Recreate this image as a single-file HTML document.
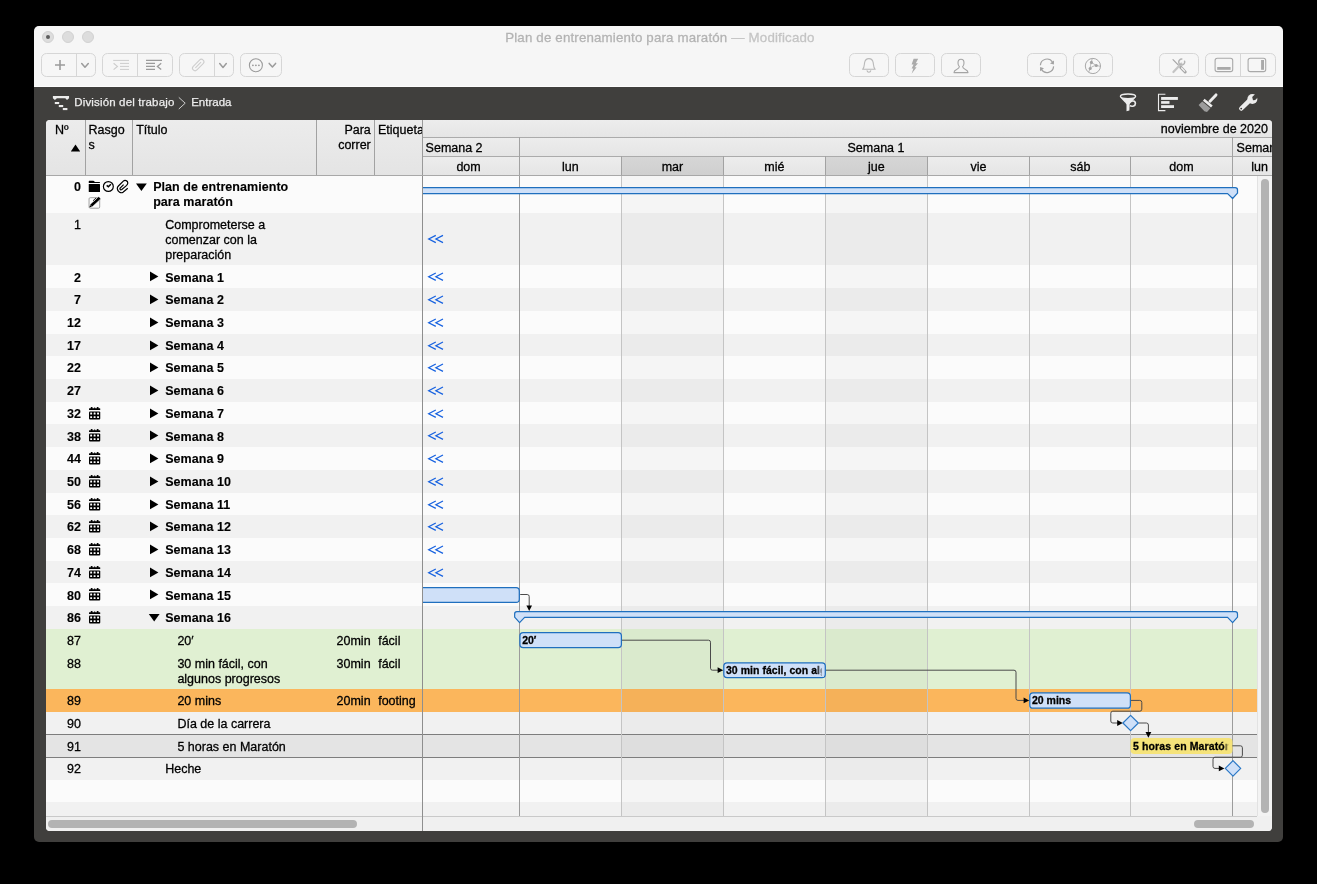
<!DOCTYPE html>
<html><head><meta charset="utf-8"><title>Plan de entrenamiento para maratón</title>
<style>
html,body{margin:0;padding:0}
body{width:1317px;height:884px;background:#000;position:relative;overflow:hidden;
 font-family:"Liberation Sans",sans-serif;font-size:12.5px;line-height:15.0px;color:#000}
.a{position:absolute}
.t{position:absolute;white-space:nowrap;letter-spacing:0.0px;-webkit-text-stroke:0.28px currentColor}
.b{font-weight:bold;letter-spacing:0.05px;-webkit-text-stroke:0.12px currentColor}
.btn{position:absolute;box-sizing:border-box;border:1px solid #d6d6d6;border-radius:5.5px;top:53.2px;height:23.6px}
.dv{position:absolute;width:1px;background:#d6d6d6;top:53.7px;height:22.6px}
.vl{position:absolute;width:1px;top:0;background:#c6c6c6}
svg{position:absolute;overflow:visible}
</style></head><body>
<div class="a" style="left:0;top:0;width:1317px;height:884px;will-change:transform">

<div class="a" style="left:34px;top:26px;width:1249px;height:815.8px;background:#403f3d;border-radius:5px;overflow:hidden">
<div class="a" style="left:0;top:0;width:100%;height:60px;background:#f6f6f6"></div>
<div class="a" style="left:0;top:60px;width:100%;height:1px;background:#fdfdfd"></div>
</div>
<div class="a" style="left:42px;top:31px;width:12px;height:12px;box-sizing:border-box;border-radius:50%;background:#dddddd;border:1px solid #d2d2d2"></div>
<div class="a" style="left:62px;top:31px;width:12px;height:12px;box-sizing:border-box;border-radius:50%;background:#dddddd;border:1px solid #d2d2d2"></div>
<div class="a" style="left:82px;top:31px;width:12px;height:12px;box-sizing:border-box;border-radius:50%;background:#dddddd;border:1px solid #d2d2d2"></div>
<div class="a" style="left:46px;top:35px;width:4px;height:4px;border-radius:50%;background:#5e5e5e"></div>
<div class="t" style="left:35.4px;width:1249px;top:30px;text-align:center;font-size:13.3px;letter-spacing:0.165px;color:#b3b3b3">Plan de entrenamiento para maratón <span style="color:#c4c4c4">— Modificado</span></div>
<div class="btn" style="left:41.3px;width:54.4px"></div>
<div class="dv" style="left:76.1px"></div>
<svg style="left:0;top:0" width="1" height="1"><path d="M55 65H65M60 60V70" stroke="#9b9b9b" stroke-width="1.6" fill="none"/></svg>
<svg style="left:0;top:0" width="1" height="1"><path d="M81.7 63.5 L85 67.3 L88.3 63.5" fill="none" stroke="#9b9b9b" stroke-width="1.5" stroke-linecap="round" stroke-linejoin="round"/></svg>
<div class="btn" style="left:102.4px;width:70.3px"></div>
<div class="dv" style="left:136.9px"></div>
<svg style="left:0;top:0" width="1" height="1"><g fill="none" stroke="#cdcdcd" stroke-width="1"><path d="M113.2 60.4H129M120 63.4H129M120 66.4H129M120 69.4H129"/><path d="M113.6 63.2L117.4 66.4L113.6 69.6" stroke-width="1.2"/></g></svg>
<svg style="left:0;top:0" width="1" height="1"><g fill="none" stroke="#9b9b9b" stroke-width="1.1"><path d="M146 60.4H162M146 63.4H155M146 66.4H155M146 69.4H155"/><path d="M161.2 63.2L157.4 66.4L161.2 69.6" stroke-width="1.3"/></g></svg>
<div class="btn" style="left:179.4px;width:54.3px"></div>
<div class="dv" style="left:213.9px"></div>
<svg style="left:0;top:0" width="1" height="1"><g transform="translate(198.2 65) rotate(-45)" fill="none" stroke="#cdcdcd" stroke-width="1"><rect x="-7" y="-2.6" width="14" height="5.2" rx="2.6"/><path d="M-4 0H4"/></g></svg>
<svg style="left:0;top:0" width="1" height="1"><path d="M219.7 63.6 L223 67.4 L226.3 63.6" fill="none" stroke="#9b9b9b" stroke-width="1.5" stroke-linecap="round" stroke-linejoin="round"/></svg>
<div class="btn" style="left:240.2px;width:41.4px"></div>
<svg style="left:0;top:0" width="1" height="1"><circle cx="255.9" cy="65.3" r="6.5" fill="none" stroke="#9b9b9b" stroke-width="1.1"/><g fill="#9b9b9b"><circle cx="252.9" cy="65.3" r="0.9"/><circle cx="255.9" cy="65.3" r="0.9"/><circle cx="258.9" cy="65.3" r="0.9"/></g></svg>
<svg style="left:0;top:0" width="1" height="1"><path d="M269.2 63.4 L272.4 67 L275.6 63.4" fill="none" stroke="#9b9b9b" stroke-width="1.5" stroke-linecap="round" stroke-linejoin="round"/></svg>
<div class="btn" style="left:849px;width:39.8px"></div>
<svg style="left:0;top:0" width="1" height="1"><g fill="none" stroke="#b9b9b9" stroke-width="1.1" stroke-linejoin="round"><path d="M862.6 69.3 C864.6 67.6 864.2 64.6 864.6 62.6 C865.1 60 866.8 58.6 868.9 58.6 C871 58.6 872.7 60 873.2 62.6 C873.6 64.6 873.2 67.6 875.2 69.3 Z"/><path d="M866.9 70.3 C867.2 71.6 868 72.2 868.9 72.2 C869.8 72.2 870.6 71.6 870.9 70.3"/></g></svg>
<div class="btn" style="left:895px;width:39.9px"></div>
<svg style="left:0;top:0" width="1" height="1"><path d="M913.6 58.8 L918.2 58.8 L915.8 63.2 L918 63.2 L914.6 67.2 L916.6 67.2 L911.6 73.8 L913.4 68.6 L911.6 68.6 L913.6 64.4 L911.6 64.4 Z" fill="#ababab"/></svg>
<div class="btn" style="left:941px;width:39.9px"></div>
<svg style="left:0;top:0" width="1" height="1"><path d="M961 59.3 C962.9 59.3 964 60.9 964 62.9 C964 64.6 963.4 65.9 962.6 66.6 C962.6 68 963.6 68.6 965.4 69.4 C967 70.1 968 71 968 72.6 L954 72.6 C954 71 955 70.1 956.6 69.4 C958.4 68.6 959.4 68 959.4 66.6 C958.6 65.9 958 64.6 958 62.9 C958 60.9 959.1 59.3 961 59.3 Z" fill="none" stroke="#a4a4a4" stroke-width="1.1" stroke-linejoin="round"/></svg>
<div class="btn" style="left:1027.2px;width:39.6px"></div>
<svg style="left:0;top:0" width="1" height="1"><g fill="none" stroke="#a2a2a2" stroke-width="1.2"><path d="M1040.4 65.2 A6.6 6.6 0 0 1 1052.6 62.2"/><path d="M1053.6 66.4 A6.6 6.6 0 0 1 1041.4 69.4"/></g><path d="M1054 60.4 L1053.9 64.6 L1050 63.4 Z M1040 71.2 L1040.1 67 L1044 68.2 Z" fill="#a2a2a2"/></svg>
<div class="btn" style="left:1073.2px;width:39.6px"></div>
<svg style="left:0;top:0" width="1" height="1"><g fill="none" stroke="#a8a8a8" stroke-width="1"><circle cx="1092.9" cy="66" r="7.6"/><path d="M1091.4 62.4 C1090.6 64.4 1090.2 66.4 1090.2 68.5 M1091.4 62.4 L1096.3 65.5 M1090.2 68.5 C1091.8 66.6 1093.8 65.8 1096.3 65.5 M1091.4 62.4 L1092.2 58.6 M1096.3 65.5 L1100.4 66.3 M1090.2 68.5 L1088.6 72.2" stroke-width="0.8"/></g><g fill="#a2a2a2"><circle cx="1091.4" cy="62.4" r="1.55"/><circle cx="1096.3" cy="65.5" r="1.55"/><circle cx="1090.2" cy="68.5" r="1.55"/></g></svg>
<div class="btn" style="left:1159.3px;width:39.5px"></div>
<svg style="left:0;top:0" width="1" height="1"><g stroke-linecap="round" fill="none"><path d="M1173 59.6 L1180.6 67.4" stroke="#a6a6a6" stroke-width="1.2"/><path d="M1180.8 67.4 L1185.2 72" stroke="#a6a6a6" stroke-width="3"/><path d="M1181.6 68 L1184.6 71.2" stroke="#f6f6f6" stroke-width="1.2"/><path d="M1173.4 72 L1181.4 63.6" stroke="#c4c4c4" stroke-width="2.2"/><path d="M1184.6 61.2 A3 3 0 1 1 1181.8 59" stroke="#b4b4b4" stroke-width="1.5"/></g></svg>
<div class="btn" style="left:1205.2px;width:70.8px"></div>
<div class="dv" style="left:1240.1px"></div>
<svg style="left:0;top:0" width="1" height="1"><rect x="1215.1" y="58.3" width="17.6" height="13.3" rx="2.2" fill="none" stroke="#a9a9a9" stroke-width="1.1"/><rect x="1217.2" y="67" width="13.4" height="2.8" fill="#a9a9a9"/></svg>
<svg style="left:0;top:0" width="1" height="1"><rect x="1248.1" y="58.3" width="17.6" height="13.3" rx="2.2" fill="none" stroke="#a9a9a9" stroke-width="1.1"/><rect x="1261.1" y="60" width="2.9" height="9.8" fill="#a9a9a9"/></svg>
<svg style="left:0;top:0" width="1" height="1"><g fill="#ececec"><path d="M52.9 95.9 H69.05 V98.2 L67 100.1 L65.3 98.2 H56.9 L54.9 100.1 L52.9 98.2 Z"/><rect x="54.8" y="102" width="4.4" height="2.05"/><rect x="58.8" y="105" width="4.4" height="2.1"/><rect x="62.8" y="108" width="4.6" height="2.1"/></g></svg>
<div class="t" style="left:74.3px;top:94.5px;letter-spacing:0.15px;font-size:11.5px;color:#ededed;-webkit-text-stroke:0.25px #ededed">División del trabajo</div>
<svg style="left:0;top:0" width="1" height="1"><path d="M178.8 97.4 L185.2 103.2 L178.8 109" fill="none" stroke="#dcdcdc" stroke-width="0.9"/></svg>
<div class="t" style="left:191.2px;top:94.5px;letter-spacing:0px;font-size:11.5px;color:#ededed;-webkit-text-stroke:0.25px #ededed">Entrada</div>
<svg style="left:0;top:0" width="1" height="1"><g><ellipse cx="1128" cy="96.3" rx="7.6" ry="2.3" fill="none" stroke="#ececec" stroke-width="1.4"/><path d="M1120.4 97 C1123 99 1133 99 1135.6 97 C1134.6 99.6 1130.2 102.4 1129.6 104.6 L1129.4 110.6 L1126.5 111.2 L1126.5 104.6 C1125.8 102.4 1121.4 99.6 1120.4 97 Z" fill="#ececec"/><path d="M1130 102.2 C1131.6 100.4 1135.4 100.4 1135.4 103.4 C1135.4 106 1132.4 106.8 1129.8 105.8" fill="none" stroke="#ececec" stroke-width="1.6"/></g></svg>
<svg style="left:0;top:0" width="1" height="1"><path d="M1165.4 94.3 H1158.5 V110.6 H1165.4" fill="none" stroke="#ececec" stroke-width="1.1"/><g fill="#ececec"><rect x="1161.1" y="97" width="16.8" height="2.9"/><rect x="1161.1" y="101.1" width="8.4" height="2.7"/><rect x="1161.1" y="105.2" width="12.9" height="2.8"/></g></svg>
<svg style="left:0;top:0" width="1" height="1"><path d="M1216 94.9 L1210 101.2" stroke="#ececec" stroke-width="2.9" stroke-linecap="round" fill="none"/><path d="M1204.6 98.7 L1212.7 105.5 L1211 107.4 L1202.9 100.7 Z" fill="#ececec"/><path d="M1202.3 101.5 L1210.4 108.2 L1207 112 L1204.4 111.3 L1198.6 105 Z" fill="#9c9c9c"/></svg>
<svg style="left:0;top:0" width="1" height="1"><path d="M1241.3 108.5 L1250.4 99.6" stroke="#ececec" stroke-width="4.5" stroke-linecap="round" fill="none"/><circle cx="1252.4" cy="99" r="5" fill="#ececec"/><path d="M1252.2 97 L1256.8 92.4 L1259.8 95.4 L1255.2 100 L1253 100.2 Z" fill="#403f3d"/><circle cx="1241.2" cy="108.6" r="0.95" fill="#403f3d"/></svg>
<div class="a" style="left:46px;top:119.8px;width:1226px;height:711.2px;background:#f0f0f0;border-radius:4px;overflow:hidden">
<div class="a" style="left:-46px;top:-119.8px;width:1317px;height:884px">
<div class="a" style="left:46px;top:175.4px;width:1226px;height:37.9px;background:#fbfbfb"></div>
<div class="a" style="left:46px;top:213px;width:1226px;height:52.3px;background:#f1f1f1"></div>
<div class="a" style="left:46px;top:265px;width:1226px;height:23.3px;background:#fbfbfb"></div>
<div class="a" style="left:46px;top:288px;width:1226px;height:23.3px;background:#f1f1f1"></div>
<div class="a" style="left:46px;top:311px;width:1226px;height:23.3px;background:#fbfbfb"></div>
<div class="a" style="left:46px;top:334px;width:1226px;height:22.3px;background:#f1f1f1"></div>
<div class="a" style="left:46px;top:356px;width:1226px;height:23.3px;background:#fbfbfb"></div>
<div class="a" style="left:46px;top:379px;width:1226px;height:23.3px;background:#f1f1f1"></div>
<div class="a" style="left:46px;top:402px;width:1226px;height:22.3px;background:#fbfbfb"></div>
<div class="a" style="left:46px;top:424px;width:1226px;height:23.3px;background:#f1f1f1"></div>
<div class="a" style="left:46px;top:447px;width:1226px;height:23.3px;background:#fbfbfb"></div>
<div class="a" style="left:46px;top:470px;width:1226px;height:23.3px;background:#f1f1f1"></div>
<div class="a" style="left:46px;top:493px;width:1226px;height:22.3px;background:#fbfbfb"></div>
<div class="a" style="left:46px;top:515px;width:1226px;height:23.3px;background:#f1f1f1"></div>
<div class="a" style="left:46px;top:538px;width:1226px;height:23.3px;background:#fbfbfb"></div>
<div class="a" style="left:46px;top:561px;width:1226px;height:22.3px;background:#f1f1f1"></div>
<div class="a" style="left:46px;top:583px;width:1226px;height:23.3px;background:#fbfbfb"></div>
<div class="a" style="left:46px;top:606px;width:1226px;height:23.3px;background:#f1f1f1"></div>
<div class="a" style="left:46px;top:629px;width:1226px;height:23.3px;background:#e0f0d2"></div>
<div class="a" style="left:46px;top:652px;width:1226px;height:37.3px;background:#e0f0d2"></div>
<div class="a" style="left:46px;top:689px;width:1226px;height:23.3px;background:#fbb65c"></div>
<div class="a" style="left:46px;top:712px;width:1226px;height:23.3px;background:#f1f1f1"></div>
<div class="a" style="left:46px;top:735px;width:1226px;height:22.9px;background:#e4e4e4"></div>
<div class="a" style="left:46px;top:757.6px;width:1226px;height:22.7px;background:#f1f1f1"></div>
<div class="a" style="left:46px;top:780px;width:1226px;height:22.3px;background:#fbfbfb"></div>
<div class="a" style="left:46px;top:802px;width:1226px;height:14.7px;background:#f1f1f1"></div>
<div class="a" style="left:621.5px;top:175.3px;width:101.89px;height:641.1px;background:rgba(0,0,0,0.023)"></div>
<div class="a" style="left:825.5px;top:175.3px;width:101.89px;height:641.1px;background:rgba(0,0,0,0.023)"></div>
<div class="a" style="left:46px;top:734.4px;width:1211px;height:1px;background:#7d7d7d"></div>
<div class="a" style="left:46px;top:757.3px;width:1211px;height:1px;background:#7d7d7d"></div>
<div class="a" style="left:519px;top:175.3px;width:1px;height:641.1px;background:#9c9c9c"></div>
<div class="a" style="left:621px;top:175.3px;width:1px;height:641.1px;background:#c4c4c4"></div>
<div class="a" style="left:723px;top:175.3px;width:1px;height:641.1px;background:#c4c4c4"></div>
<div class="a" style="left:825px;top:175.3px;width:1px;height:641.1px;background:#c4c4c4"></div>
<div class="a" style="left:927px;top:175.3px;width:1px;height:641.1px;background:#c4c4c4"></div>
<div class="a" style="left:1029px;top:175.3px;width:1px;height:641.1px;background:#c4c4c4"></div>
<div class="a" style="left:1130px;top:175.3px;width:1px;height:641.1px;background:#c4c4c4"></div>
<div class="a" style="left:1232px;top:175.3px;width:1px;height:641.1px;background:#9c9c9c"></div>
<div class="a" style="left:1257px;top:175.3px;width:15px;height:641.1px;background:#f3f3f3;border-left:1px solid #e2e2e2"></div>
<div class="a" style="left:1261.2px;top:179px;width:7.8px;height:633.8px;border-radius:4px;background:#b3b3b3"></div>
<div class="a" style="left:46px;top:816.4px;width:1226px;height:14.6px;background:#f0f0f0"></div>
<div class="a" style="left:46px;top:816.4px;width:1211px;height:1px;background:#c9c9c9"></div>
<div class="a" style="left:48px;top:819.9px;width:309px;height:8px;border-radius:4px;background:#b3b3b3"></div>
<div class="a" style="left:1194px;top:819.9px;width:60px;height:8px;border-radius:4px;background:#b3b3b3"></div>
<div class="a" style="left:422px;top:119.8px;width:1px;height:711.2px;background:#8e8e8e"></div>
<div class="a" style="left:46px;top:119.8px;width:376.5px;height:55.5px;background:linear-gradient(#ececec,#e4e4e4)"></div>
<div class="a" style="left:422.5px;top:119.8px;width:849.5px;height:17.4px;background:linear-gradient(#ededed,#e5e5e5)"></div>
<div class="a" style="left:422.5px;top:137.2px;width:849.5px;height:19.1px;background:linear-gradient(#ededed,#e5e5e5)"></div>
<div class="a" style="left:422.5px;top:156.3px;width:849.5px;height:19px;background:linear-gradient(#ededed,#e5e5e5)"></div>
<div class="a" style="left:621.5px;top:157px;width:101.89px;height:18.3px;background:linear-gradient(#d6d6d6,#cfcfcf)"></div>
<div class="a" style="left:825.5px;top:157px;width:101.89px;height:18.3px;background:linear-gradient(#d6d6d6,#cfcfcf)"></div>
<div class="a" style="left:46px;top:174.7px;width:1226px;height:1px;background:#a8a8a8"></div>
<div class="a" style="left:422.5px;top:137.2px;width:849.5px;height:1px;background:#ababab"></div>
<div class="a" style="left:422.5px;top:156.3px;width:849.5px;height:1px;background:#ababab"></div>
<div class="a" style="left:84.8px;top:119.8px;width:1px;height:55.5px;background:#a2a2a2"></div>
<div class="a" style="left:131.9px;top:119.8px;width:1px;height:55.5px;background:#a2a2a2"></div>
<div class="a" style="left:316.2px;top:119.8px;width:1px;height:55.5px;background:#a2a2a2"></div>
<div class="a" style="left:374.1px;top:119.8px;width:1px;height:55.5px;background:#a2a2a2"></div>
<div class="a" style="left:519px;top:137.2px;width:1px;height:38.1px;background:#a2a2a2"></div>
<div class="a" style="left:621px;top:156.3px;width:1px;height:19px;background:#a2a2a2"></div>
<div class="a" style="left:723px;top:156.3px;width:1px;height:19px;background:#a2a2a2"></div>
<div class="a" style="left:825px;top:156.3px;width:1px;height:19px;background:#a2a2a2"></div>
<div class="a" style="left:927px;top:156.3px;width:1px;height:19px;background:#a2a2a2"></div>
<div class="a" style="left:1029px;top:156.3px;width:1px;height:19px;background:#a2a2a2"></div>
<div class="a" style="left:1130px;top:156.3px;width:1px;height:19px;background:#a2a2a2"></div>
<div class="a" style="left:1232px;top:137.2px;width:1px;height:38.1px;background:#a2a2a2"></div>
<div class="t" style="left:55px;top:122.6px">Nº</div>
<svg style="left:0;top:0" width="1" height="1"><path d="M70.8 151.6 L80.2 151.6 L75.5 144.6 Z" fill="#000"/></svg>
<div class="t" style="left:88.6px;top:122.6px;white-space:normal;width:40px;line-height:15.2px">Rasgo<br>s</div>
<div class="t" style="left:136.2px;top:122.6px">Título</div>
<div class="t" style="left:320px;width:50.8px;top:122.6px;text-align:right;white-space:normal;line-height:15.2px">Para<br>correr</div>
<div class="a" style="left:378px;top:122.6px;width:44px;overflow:hidden;height:16px"><div class="t" style="left:0;top:0">Etiqueta</div></div>
<div class="t" style="left:1100px;width:167.9px;top:121.6px;text-align:right">noviembre de 2020</div>
<div class="t" style="left:425.6px;top:140.9px">Semana 2</div>
<div class="t" style="left:519.5px;width:713px;top:140.9px;text-align:center">Semana 1</div>
<div class="t" style="left:1236.6px;top:140.9px">Semana</div>
<div class="t" style="left:417.61px;width:101.89px;top:159.9px;text-align:center">dom</div>
<div class="t" style="left:519.5px;width:101.89px;top:159.9px;text-align:center">lun</div>
<div class="t" style="left:621.5px;width:101.89px;top:159.9px;text-align:center">mar</div>
<div class="t" style="left:723.5px;width:101.89px;top:159.9px;text-align:center">mié</div>
<div class="t" style="left:825.5px;width:101.89px;top:159.9px;text-align:center">jue</div>
<div class="t" style="left:927.5px;width:101.89px;top:159.9px;text-align:center">vie</div>
<div class="t" style="left:1029.5px;width:101.89px;top:159.9px;text-align:center">sáb</div>
<div class="t" style="left:1130.5px;width:101.89px;top:159.9px;text-align:center">dom</div>
<div class="t" style="left:1232.5px;width:54px;top:159.9px;text-align:center">lun</div>
<div class="a" style="left:422px;top:119.8px;width:1px;height:55.5px;background:#9a9a9a"></div>
<div class="t b" style="left:46px;width:35px;top:180px;text-align:right">0</div>
<div class="t b" style="left:153.2px;top:180px">Plan de entrenamiento<br>para maratón</div>
<svg style="left:0;top:0" width="1" height="1"><path d="M136 183.4 H146.8 L141.4 191 Z" fill="#000"/></svg>
<svg style="left:0;top:0" width="1" height="1"><path d="M88.75 181.4 Q88.75 180.8 89.35 180.8 H93.3 Q93.8 180.8 94.2 181.2 L94.9 181.9 H99.4 Q100 181.9 100 182.5 V182.95 H88.75 Z" fill="#000"/><rect x="88.75" y="184.1" width="11.25" height="7.9" rx="0.5" fill="#000"/></svg><svg style="left:0;top:0" width="1" height="1"><circle cx="108.35" cy="186.5" r="4.95" fill="none" stroke="#000" stroke-width="1.2"/><path d="M106.7 185.4 L108.35 186.75 L110.9 184.3" fill="none" stroke="#000" stroke-width="1.5"/></svg><svg style="left:0;top:0" width="1" height="1"><path d="M127.75 188.3 L123 192.2 C121.2 193.6 117.6 192 117.3 188.6 C117.2 187.6 117.6 186.8 118.4 186 L123.3 181.1 C124.9 179.7 127.8 180.6 127.8 183 C127.8 184 127.3 184.8 126.4 185.6 L121.8 189.5 C120.4 190.6 119.2 188.9 120.4 187.8 L123.6 184.6" fill="none" stroke="#000" stroke-width="1.2"/></svg><svg style="left:0;top:0" width="1" height="1"><rect x="89.05" y="197.7" width="10.65" height="10.5" rx="1.2" fill="#fdfdfd" stroke="#a0a0a0" stroke-width="1"/><g transform="translate(94.3 202.75) rotate(-43)"><path d="M-7.6 0 L-4.6 -1.6 H6.6 Q7.6 -1.6 7.6 -0.6 V0.6 Q7.6 1.6 6.6 1.6 H-4.6 Z" fill="#000" stroke="#fdfdfd" stroke-width="0.5"/><path d="M-4.4 -1.6 V1.6" stroke="#fdfdfd" stroke-width="0.45"/><path d="M0.4 -2.3 H4.6" stroke="#000" stroke-width="0.8"/><path d="M0.4 -1.45 H4.2" stroke="#fdfdfd" stroke-width="0.4"/></g></svg>
<div class="t" style="left:46px;width:35px;top:218px;text-align:right">1</div>
<div class="t" style="left:165.2px;top:218px">Comprometerse a<br>comenzar con la<br>preparación</div>
<div class="t b" style="left:46px;width:35px;top:271px;text-align:right">2</div>
<div class="t b" style="left:165.2px;top:271px">Semana 1</div>
<svg style="left:0;top:0" width="1" height="1"><path d="M150 271.5 V281.3 L158.4 276.4 Z" fill="#000"/></svg>
<div class="t b" style="left:46px;width:35px;top:293px;text-align:right">7</div>
<div class="t b" style="left:165.2px;top:293px">Semana 2</div>
<svg style="left:0;top:0" width="1" height="1"><path d="M150 294.5 V304.3 L158.4 299.4 Z" fill="#000"/></svg>
<div class="t b" style="left:46px;width:35px;top:316px;text-align:right">12</div>
<div class="t b" style="left:165.2px;top:316px">Semana 3</div>
<svg style="left:0;top:0" width="1" height="1"><path d="M150 317.5 V327.3 L158.4 322.4 Z" fill="#000"/></svg>
<div class="t b" style="left:46px;width:35px;top:339px;text-align:right">17</div>
<div class="t b" style="left:165.2px;top:339px">Semana 4</div>
<svg style="left:0;top:0" width="1" height="1"><path d="M150 340.5 V350.3 L158.4 345.4 Z" fill="#000"/></svg>
<div class="t b" style="left:46px;width:35px;top:361px;text-align:right">22</div>
<div class="t b" style="left:165.2px;top:361px">Semana 5</div>
<svg style="left:0;top:0" width="1" height="1"><path d="M150 362.5 V372.3 L158.4 367.4 Z" fill="#000"/></svg>
<div class="t b" style="left:46px;width:35px;top:384px;text-align:right">27</div>
<div class="t b" style="left:165.2px;top:384px">Semana 6</div>
<svg style="left:0;top:0" width="1" height="1"><path d="M150 385.5 V395.3 L158.4 390.4 Z" fill="#000"/></svg>
<div class="t b" style="left:46px;width:35px;top:407px;text-align:right">32</div>
<div class="t b" style="left:165.2px;top:407px">Semana 7</div>
<svg style="left:0;top:0" width="1" height="1"><path d="M150 408.5 V418.3 L158.4 413.4 Z" fill="#000"/></svg>
<svg style="left:88.9px;top:406.8px" width="12" height="13" viewBox="0 0 12 13"><rect x="0" y="1.2" width="11.25" height="1.85" rx="0.5" fill="#000"/><rect x="1.7" y="-0.1" width="1.9" height="2" rx="0.7" fill="#000"/><rect x="7.7" y="-0.1" width="1.9" height="2" rx="0.7" fill="#000"/><rect x="4.9" y="0.5" width="1.5" height="1.2" rx="0.5" fill="#000"/><rect x="0" y="4.55" width="11.25" height="7.95" rx="1" fill="#000"/><rect x="1.2" y="5.6" width="1.9" height="1.9" rx="0.3" fill="#fff"/><rect x="4.65" y="5.6" width="1.9" height="1.9" rx="0.3" fill="#fff"/><rect x="8.1" y="5.6" width="1.9" height="1.9" rx="0.3" fill="#fff"/><rect x="1.2" y="9.2" width="1.9" height="1.9" rx="0.3" fill="#fff"/><rect x="4.65" y="9.2" width="1.9" height="1.9" rx="0.3" fill="#fff"/><rect x="8.1" y="9.2" width="1.9" height="1.9" rx="0.3" fill="#fff"/></svg>
<div class="t b" style="left:46px;width:35px;top:430px;text-align:right">38</div>
<div class="t b" style="left:165.2px;top:430px">Semana 8</div>
<svg style="left:0;top:0" width="1" height="1"><path d="M150 430.5 V440.3 L158.4 435.4 Z" fill="#000"/></svg>
<svg style="left:88.9px;top:428.8px" width="12" height="13" viewBox="0 0 12 13"><rect x="0" y="1.2" width="11.25" height="1.85" rx="0.5" fill="#000"/><rect x="1.7" y="-0.1" width="1.9" height="2" rx="0.7" fill="#000"/><rect x="7.7" y="-0.1" width="1.9" height="2" rx="0.7" fill="#000"/><rect x="4.9" y="0.5" width="1.5" height="1.2" rx="0.5" fill="#000"/><rect x="0" y="4.55" width="11.25" height="7.95" rx="1" fill="#000"/><rect x="1.2" y="5.6" width="1.9" height="1.9" rx="0.3" fill="#fff"/><rect x="4.65" y="5.6" width="1.9" height="1.9" rx="0.3" fill="#fff"/><rect x="8.1" y="5.6" width="1.9" height="1.9" rx="0.3" fill="#fff"/><rect x="1.2" y="9.2" width="1.9" height="1.9" rx="0.3" fill="#fff"/><rect x="4.65" y="9.2" width="1.9" height="1.9" rx="0.3" fill="#fff"/><rect x="8.1" y="9.2" width="1.9" height="1.9" rx="0.3" fill="#fff"/></svg>
<div class="t b" style="left:46px;width:35px;top:452px;text-align:right">44</div>
<div class="t b" style="left:165.2px;top:452px">Semana 9</div>
<svg style="left:0;top:0" width="1" height="1"><path d="M150 453.5 V463.3 L158.4 458.4 Z" fill="#000"/></svg>
<svg style="left:88.9px;top:451.8px" width="12" height="13" viewBox="0 0 12 13"><rect x="0" y="1.2" width="11.25" height="1.85" rx="0.5" fill="#000"/><rect x="1.7" y="-0.1" width="1.9" height="2" rx="0.7" fill="#000"/><rect x="7.7" y="-0.1" width="1.9" height="2" rx="0.7" fill="#000"/><rect x="4.9" y="0.5" width="1.5" height="1.2" rx="0.5" fill="#000"/><rect x="0" y="4.55" width="11.25" height="7.95" rx="1" fill="#000"/><rect x="1.2" y="5.6" width="1.9" height="1.9" rx="0.3" fill="#fff"/><rect x="4.65" y="5.6" width="1.9" height="1.9" rx="0.3" fill="#fff"/><rect x="8.1" y="5.6" width="1.9" height="1.9" rx="0.3" fill="#fff"/><rect x="1.2" y="9.2" width="1.9" height="1.9" rx="0.3" fill="#fff"/><rect x="4.65" y="9.2" width="1.9" height="1.9" rx="0.3" fill="#fff"/><rect x="8.1" y="9.2" width="1.9" height="1.9" rx="0.3" fill="#fff"/></svg>
<div class="t b" style="left:46px;width:35px;top:475px;text-align:right">50</div>
<div class="t b" style="left:165.2px;top:475px">Semana 10</div>
<svg style="left:0;top:0" width="1" height="1"><path d="M150 476.5 V486.3 L158.4 481.4 Z" fill="#000"/></svg>
<svg style="left:88.9px;top:474.8px" width="12" height="13" viewBox="0 0 12 13"><rect x="0" y="1.2" width="11.25" height="1.85" rx="0.5" fill="#000"/><rect x="1.7" y="-0.1" width="1.9" height="2" rx="0.7" fill="#000"/><rect x="7.7" y="-0.1" width="1.9" height="2" rx="0.7" fill="#000"/><rect x="4.9" y="0.5" width="1.5" height="1.2" rx="0.5" fill="#000"/><rect x="0" y="4.55" width="11.25" height="7.95" rx="1" fill="#000"/><rect x="1.2" y="5.6" width="1.9" height="1.9" rx="0.3" fill="#fff"/><rect x="4.65" y="5.6" width="1.9" height="1.9" rx="0.3" fill="#fff"/><rect x="8.1" y="5.6" width="1.9" height="1.9" rx="0.3" fill="#fff"/><rect x="1.2" y="9.2" width="1.9" height="1.9" rx="0.3" fill="#fff"/><rect x="4.65" y="9.2" width="1.9" height="1.9" rx="0.3" fill="#fff"/><rect x="8.1" y="9.2" width="1.9" height="1.9" rx="0.3" fill="#fff"/></svg>
<div class="t b" style="left:46px;width:35px;top:498px;text-align:right">56</div>
<div class="t b" style="left:165.2px;top:498px">Semana 11</div>
<svg style="left:0;top:0" width="1" height="1"><path d="M150 499.5 V509.3 L158.4 504.4 Z" fill="#000"/></svg>
<svg style="left:88.9px;top:497.8px" width="12" height="13" viewBox="0 0 12 13"><rect x="0" y="1.2" width="11.25" height="1.85" rx="0.5" fill="#000"/><rect x="1.7" y="-0.1" width="1.9" height="2" rx="0.7" fill="#000"/><rect x="7.7" y="-0.1" width="1.9" height="2" rx="0.7" fill="#000"/><rect x="4.9" y="0.5" width="1.5" height="1.2" rx="0.5" fill="#000"/><rect x="0" y="4.55" width="11.25" height="7.95" rx="1" fill="#000"/><rect x="1.2" y="5.6" width="1.9" height="1.9" rx="0.3" fill="#fff"/><rect x="4.65" y="5.6" width="1.9" height="1.9" rx="0.3" fill="#fff"/><rect x="8.1" y="5.6" width="1.9" height="1.9" rx="0.3" fill="#fff"/><rect x="1.2" y="9.2" width="1.9" height="1.9" rx="0.3" fill="#fff"/><rect x="4.65" y="9.2" width="1.9" height="1.9" rx="0.3" fill="#fff"/><rect x="8.1" y="9.2" width="1.9" height="1.9" rx="0.3" fill="#fff"/></svg>
<div class="t b" style="left:46px;width:35px;top:520px;text-align:right">62</div>
<div class="t b" style="left:165.2px;top:520px">Semana 12</div>
<svg style="left:0;top:0" width="1" height="1"><path d="M150 521.5 V531.3 L158.4 526.4 Z" fill="#000"/></svg>
<svg style="left:88.9px;top:519.8px" width="12" height="13" viewBox="0 0 12 13"><rect x="0" y="1.2" width="11.25" height="1.85" rx="0.5" fill="#000"/><rect x="1.7" y="-0.1" width="1.9" height="2" rx="0.7" fill="#000"/><rect x="7.7" y="-0.1" width="1.9" height="2" rx="0.7" fill="#000"/><rect x="4.9" y="0.5" width="1.5" height="1.2" rx="0.5" fill="#000"/><rect x="0" y="4.55" width="11.25" height="7.95" rx="1" fill="#000"/><rect x="1.2" y="5.6" width="1.9" height="1.9" rx="0.3" fill="#fff"/><rect x="4.65" y="5.6" width="1.9" height="1.9" rx="0.3" fill="#fff"/><rect x="8.1" y="5.6" width="1.9" height="1.9" rx="0.3" fill="#fff"/><rect x="1.2" y="9.2" width="1.9" height="1.9" rx="0.3" fill="#fff"/><rect x="4.65" y="9.2" width="1.9" height="1.9" rx="0.3" fill="#fff"/><rect x="8.1" y="9.2" width="1.9" height="1.9" rx="0.3" fill="#fff"/></svg>
<div class="t b" style="left:46px;width:35px;top:543px;text-align:right">68</div>
<div class="t b" style="left:165.2px;top:543px">Semana 13</div>
<svg style="left:0;top:0" width="1" height="1"><path d="M150 544.5 V554.3 L158.4 549.4 Z" fill="#000"/></svg>
<svg style="left:88.9px;top:542.8px" width="12" height="13" viewBox="0 0 12 13"><rect x="0" y="1.2" width="11.25" height="1.85" rx="0.5" fill="#000"/><rect x="1.7" y="-0.1" width="1.9" height="2" rx="0.7" fill="#000"/><rect x="7.7" y="-0.1" width="1.9" height="2" rx="0.7" fill="#000"/><rect x="4.9" y="0.5" width="1.5" height="1.2" rx="0.5" fill="#000"/><rect x="0" y="4.55" width="11.25" height="7.95" rx="1" fill="#000"/><rect x="1.2" y="5.6" width="1.9" height="1.9" rx="0.3" fill="#fff"/><rect x="4.65" y="5.6" width="1.9" height="1.9" rx="0.3" fill="#fff"/><rect x="8.1" y="5.6" width="1.9" height="1.9" rx="0.3" fill="#fff"/><rect x="1.2" y="9.2" width="1.9" height="1.9" rx="0.3" fill="#fff"/><rect x="4.65" y="9.2" width="1.9" height="1.9" rx="0.3" fill="#fff"/><rect x="8.1" y="9.2" width="1.9" height="1.9" rx="0.3" fill="#fff"/></svg>
<div class="t b" style="left:46px;width:35px;top:566px;text-align:right">74</div>
<div class="t b" style="left:165.2px;top:566px">Semana 14</div>
<svg style="left:0;top:0" width="1" height="1"><path d="M150 567.5 V577.3 L158.4 572.4 Z" fill="#000"/></svg>
<svg style="left:88.9px;top:565.8px" width="12" height="13" viewBox="0 0 12 13"><rect x="0" y="1.2" width="11.25" height="1.85" rx="0.5" fill="#000"/><rect x="1.7" y="-0.1" width="1.9" height="2" rx="0.7" fill="#000"/><rect x="7.7" y="-0.1" width="1.9" height="2" rx="0.7" fill="#000"/><rect x="4.9" y="0.5" width="1.5" height="1.2" rx="0.5" fill="#000"/><rect x="0" y="4.55" width="11.25" height="7.95" rx="1" fill="#000"/><rect x="1.2" y="5.6" width="1.9" height="1.9" rx="0.3" fill="#fff"/><rect x="4.65" y="5.6" width="1.9" height="1.9" rx="0.3" fill="#fff"/><rect x="8.1" y="5.6" width="1.9" height="1.9" rx="0.3" fill="#fff"/><rect x="1.2" y="9.2" width="1.9" height="1.9" rx="0.3" fill="#fff"/><rect x="4.65" y="9.2" width="1.9" height="1.9" rx="0.3" fill="#fff"/><rect x="8.1" y="9.2" width="1.9" height="1.9" rx="0.3" fill="#fff"/></svg>
<div class="t b" style="left:46px;width:35px;top:589px;text-align:right">80</div>
<div class="t b" style="left:165.2px;top:589px">Semana 15</div>
<svg style="left:0;top:0" width="1" height="1"><path d="M150 589.5 V599.3 L158.4 594.4 Z" fill="#000"/></svg>
<svg style="left:88.9px;top:587.8px" width="12" height="13" viewBox="0 0 12 13"><rect x="0" y="1.2" width="11.25" height="1.85" rx="0.5" fill="#000"/><rect x="1.7" y="-0.1" width="1.9" height="2" rx="0.7" fill="#000"/><rect x="7.7" y="-0.1" width="1.9" height="2" rx="0.7" fill="#000"/><rect x="4.9" y="0.5" width="1.5" height="1.2" rx="0.5" fill="#000"/><rect x="0" y="4.55" width="11.25" height="7.95" rx="1" fill="#000"/><rect x="1.2" y="5.6" width="1.9" height="1.9" rx="0.3" fill="#fff"/><rect x="4.65" y="5.6" width="1.9" height="1.9" rx="0.3" fill="#fff"/><rect x="8.1" y="5.6" width="1.9" height="1.9" rx="0.3" fill="#fff"/><rect x="1.2" y="9.2" width="1.9" height="1.9" rx="0.3" fill="#fff"/><rect x="4.65" y="9.2" width="1.9" height="1.9" rx="0.3" fill="#fff"/><rect x="8.1" y="9.2" width="1.9" height="1.9" rx="0.3" fill="#fff"/></svg>
<div class="t b" style="left:46px;width:35px;top:611px;text-align:right">86</div>
<div class="t b" style="left:165.2px;top:611px">Semana 16</div>
<svg style="left:0;top:0" width="1" height="1"><path d="M148.8 614 H159.6 L154.2 621.6 Z" fill="#000"/></svg>
<svg style="left:88.9px;top:610.8px" width="12" height="13" viewBox="0 0 12 13"><rect x="0" y="1.2" width="11.25" height="1.85" rx="0.5" fill="#000"/><rect x="1.7" y="-0.1" width="1.9" height="2" rx="0.7" fill="#000"/><rect x="7.7" y="-0.1" width="1.9" height="2" rx="0.7" fill="#000"/><rect x="4.9" y="0.5" width="1.5" height="1.2" rx="0.5" fill="#000"/><rect x="0" y="4.55" width="11.25" height="7.95" rx="1" fill="#000"/><rect x="1.2" y="5.6" width="1.9" height="1.9" rx="0.3" fill="#fff"/><rect x="4.65" y="5.6" width="1.9" height="1.9" rx="0.3" fill="#fff"/><rect x="8.1" y="5.6" width="1.9" height="1.9" rx="0.3" fill="#fff"/><rect x="1.2" y="9.2" width="1.9" height="1.9" rx="0.3" fill="#fff"/><rect x="4.65" y="9.2" width="1.9" height="1.9" rx="0.3" fill="#fff"/><rect x="8.1" y="9.2" width="1.9" height="1.9" rx="0.3" fill="#fff"/></svg>
<div class="t" style="left:46px;width:35px;top:634px;text-align:right">87</div>
<div class="t" style="left:177.4px;top:634px">20′</div>
<div class="t" style="left:320px;width:50.6px;top:634px;text-align:right">20min</div>
<div class="t" style="left:378.2px;top:634px">fácil</div>
<div class="t" style="left:46px;width:35px;top:657px;text-align:right">88</div>
<div class="t" style="left:177.4px;top:657px">30 min fácil, con<br>algunos progresos</div>
<div class="t" style="left:320px;width:50.6px;top:657px;text-align:right">30min</div>
<div class="t" style="left:378.2px;top:657px">fácil</div>
<div class="t" style="left:46px;width:35px;top:694px;text-align:right">89</div>
<div class="t" style="left:177.4px;top:694px">20 mins</div>
<div class="t" style="left:320px;width:50.6px;top:694px;text-align:right">20min</div>
<div class="t" style="left:378.2px;top:694px">footing</div>
<div class="t" style="left:46px;width:35px;top:717px;text-align:right">90</div>
<div class="t" style="left:177.4px;top:717px">Día de la carrera</div>
<div class="t" style="left:46px;width:35px;top:740px;text-align:right">91</div>
<div class="t" style="left:177.4px;top:740px">5 horas en Maratón</div>
<div class="t" style="left:46px;width:35px;top:762px;text-align:right">92</div>
<div class="t" style="left:165.2px;top:762px">Heche</div>
<svg style="left:0;top:0" width="1" height="1"><path d="M435.8 235.35 L428.7 239 L435.8 242.65 M443 235.35 L435.9 239 L443 242.65" fill="none" stroke="#1762e0" stroke-width="1.25"/><path d="M435.8 273.05 L428.7 276.7 L435.8 280.35 M443 273.05 L435.9 276.7 L443 280.35" fill="none" stroke="#1762e0" stroke-width="1.25"/><path d="M435.8 296.05 L428.7 299.7 L435.8 303.35 M443 296.05 L435.9 299.7 L443 303.35" fill="none" stroke="#1762e0" stroke-width="1.25"/><path d="M435.8 319.05 L428.7 322.7 L435.8 326.35 M443 319.05 L435.9 322.7 L443 326.35" fill="none" stroke="#1762e0" stroke-width="1.25"/><path d="M435.8 342.05 L428.7 345.7 L435.8 349.35 M443 342.05 L435.9 345.7 L443 349.35" fill="none" stroke="#1762e0" stroke-width="1.25"/><path d="M435.8 364.05 L428.7 367.7 L435.8 371.35 M443 364.05 L435.9 367.7 L443 371.35" fill="none" stroke="#1762e0" stroke-width="1.25"/><path d="M435.8 387.05 L428.7 390.7 L435.8 394.35 M443 387.05 L435.9 390.7 L443 394.35" fill="none" stroke="#1762e0" stroke-width="1.25"/><path d="M435.8 410.05 L428.7 413.7 L435.8 417.35 M443 410.05 L435.9 413.7 L443 417.35" fill="none" stroke="#1762e0" stroke-width="1.25"/><path d="M435.8 432.05 L428.7 435.7 L435.8 439.35 M443 432.05 L435.9 435.7 L443 439.35" fill="none" stroke="#1762e0" stroke-width="1.25"/><path d="M435.8 455.05 L428.7 458.7 L435.8 462.35 M443 455.05 L435.9 458.7 L443 462.35" fill="none" stroke="#1762e0" stroke-width="1.25"/><path d="M435.8 478.05 L428.7 481.7 L435.8 485.35 M443 478.05 L435.9 481.7 L443 485.35" fill="none" stroke="#1762e0" stroke-width="1.25"/><path d="M435.8 501.05 L428.7 504.7 L435.8 508.35 M443 501.05 L435.9 504.7 L443 508.35" fill="none" stroke="#1762e0" stroke-width="1.25"/><path d="M435.8 523.05 L428.7 526.7 L435.8 530.35 M443 523.05 L435.9 526.7 L443 530.35" fill="none" stroke="#1762e0" stroke-width="1.25"/><path d="M435.8 546.05 L428.7 549.7 L435.8 553.35 M443 546.05 L435.9 549.7 L443 553.35" fill="none" stroke="#1762e0" stroke-width="1.25"/><path d="M435.8 569.05 L428.7 572.7 L435.8 576.35 M443 569.05 L435.9 572.7 L443 576.35" fill="none" stroke="#1762e0" stroke-width="1.25"/></svg>
<div class="a" style="left:423px;top:175.3px;width:834px;height:641.1px;overflow:hidden">
<div class="a" style="left:-423px;top:-175.3px;width:1317px;height:884px">
<svg style="left:0;top:0" width="1" height="1"><path d="M400 187.55 H1235.2 Q1237.5 187.55 1237.5 189.8 V193.2 L1232.6 198.5 L1227.6 193.6 H400 Z" fill="#cfe0f8" stroke="#1f6fbe" stroke-width="1.25" stroke-linejoin="round"/><rect x="400" y="587.7" width="119.3" height="14.7" rx="3.2" fill="#cfe0f8" stroke="#1f6fbe" stroke-width="1.25"/><path d="M520.2 594.5 H527.2 Q529.2 594.5 529.2 596.5 V606" fill="none" stroke="#4a4a4a" stroke-width="1"/><path d="M526.4 605.4 H532 L529.2 611 Z" fill="#000"/><path d="M516.9 611.65 H1235.2 Q1237.5 611.65 1237.5 613.9 V617.2 L1232.6 622.6 L1227.6 617.45 H524.6 L519.6 622.6 L514.65 617.2 V613.9 Q514.65 611.65 516.9 611.65 Z" fill="#cfe0f8" stroke="#1f6fbe" stroke-width="1.2" stroke-linejoin="round"/><rect x="519.9" y="632.7" width="101.5" height="14.8" rx="3.3" fill="#cfe0f8" stroke="#1f6fbe" stroke-width="1.25"/><rect x="723.8" y="662.8" width="101.5" height="14.8" rx="3.3" fill="#cfe0f8" stroke="#1f6fbe" stroke-width="1.25"/><rect x="1029.8" y="692.8" width="100.6" height="15.4" rx="3.3" fill="#cfe0f8" stroke="#1f6fbe" stroke-width="1.25"/><rect x="1130.6" y="738" width="101.9" height="15.9" rx="4" fill="#f5e37a"/><path d="M622 640.2 H708.5 Q710.5 640.2 710.5 642.2 V668.2 Q710.5 670.2 712.5 670.2 H718" fill="none" stroke="#4a4a4a" stroke-width="1" stroke-linejoin="round"/><path d="M717.6 667.3 V673.1 L723.2 670.2 Z" fill="#000"/><path d="M826 670.2 H1014 Q1016 670.2 1016 672.2 V698.4 Q1016 700.4 1018 700.4 H1024" fill="none" stroke="#4a4a4a" stroke-width="1" stroke-linejoin="round"/><path d="M1023.6 697.5 V703.3 L1029.2 700.4 Z" fill="#000"/><path d="M1131 700.4 H1139.8 Q1141.8 700.4 1141.8 702.4 V709.2 Q1141.8 711.2 1139.8 711.2 H1112.8 Q1110.8 711.2 1110.8 713.2 V721 Q1110.8 723 1112.8 723 H1118" fill="none" stroke="#4a4a4a" stroke-width="1" stroke-linejoin="round"/><path d="M1117.2 720.1 V725.9 L1122.8 723 Z" fill="#000"/><path d="M1138.6 723 H1146.4 Q1148.4 723 1148.4 725 V732.6" fill="none" stroke="#4a4a4a" stroke-width="1" stroke-linejoin="round"/><path d="M1145.5 732.1 H1151.3 L1148.4 737.7 Z" fill="#000"/><path d="M1232.4 745.8 H1240.4 Q1242.4 745.8 1242.4 747.8 V755.2 Q1242.4 757.2 1240.4 757.2 H1215 Q1213 757.2 1213 759.2 V766.4 Q1213 768.4 1215 768.4 H1219.4" fill="none" stroke="#4a4a4a" stroke-width="1" stroke-linejoin="round"/><path d="M1218.8 765.5 V771.3 L1224.4 768.4 Z" fill="#000"/><path d="M1122.9 723 L1130.6 715.3 L1138.3 723 L1130.6 730.7 Z" fill="#cfe0f8" stroke="#2977c6" stroke-width="1.2" stroke-linejoin="round"/><path d="M1225.3 768.4 L1233 760.7 L1240.7 768.4 L1233 776.1 Z" fill="#cfe0f8" stroke="#2977c6" stroke-width="1.2" stroke-linejoin="round"/></svg>
<div class="t" style="left:522.2px;top:633.8px;font-size:10.5px;letter-spacing:0px;font-weight:bold;line-height:13px">20′</div>
<div class="a" style="left:726px;top:664.1px;width:96.4px;height:14px;overflow:hidden"><div class="t" style="left:0;top:0;font-size:10.5px;letter-spacing:0px;font-weight:bold;line-height:13px;letter-spacing:0.03px">30 min fácil, con algunos</div></div>
<div class="a" style="left:816px;top:664px;width:7.6px;height:13px;background:linear-gradient(90deg,rgba(207,224,248,0),rgba(207,224,248,0.95))"></div>
<div class="t" style="left:1032px;top:693.8px;font-size:10.5px;letter-spacing:0px;font-weight:bold;line-height:13px">20 mins</div>
<div class="a" style="left:1133px;top:739.6px;width:96.2px;height:14px;overflow:hidden"><div class="t" style="left:0;top:0;font-size:10.5px;letter-spacing:0px;font-weight:bold;line-height:13px;letter-spacing:0.12px">5 horas en Maratón</div></div>
<div class="a" style="left:1224.4px;top:739.4px;width:5px;height:13.6px;background:linear-gradient(90deg,rgba(245,227,122,0),rgba(245,227,122,1))"></div>
</div></div>
</div></div>
</div>
</body></html>
